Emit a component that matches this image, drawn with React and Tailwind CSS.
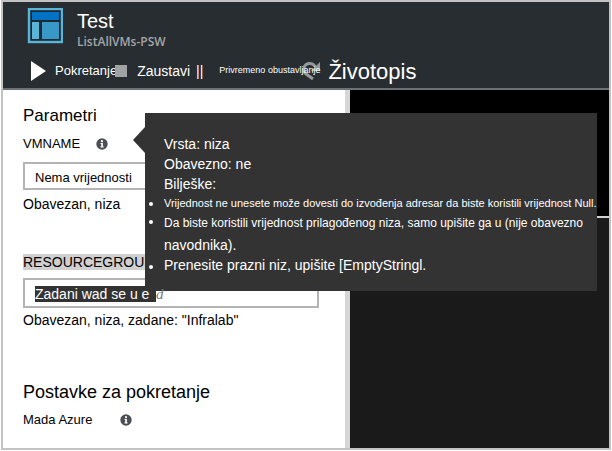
import React from "react";

function InfoIcon() {
  return (
    <svg className="h-3 w-3" viewBox="0 0 12 12" aria-hidden="true">
      <circle cx="6" cy="6" r="5.7" fill="#4c4f52" />
      <circle cx="6" cy="3.2" r="1.1" fill="#fff" />
      <path d="M4.6 5h2.3v3.4h.8v1H4.4v-1h.8V6h-.6z" fill="#fff" />
    </svg>
  );
}

function InfoButton({ label }) {
  return (
    <button type="button" aria-label={label} className="block">
      <InfoIcon />
    </button>
  );
}

function Header() {
  return (
    <header className="border-b-2 border-[#6f7275] bg-[#282d31] text-white">
      <div className="flex gap-3 pl-6 pt-1.5">
        <svg className="h-9 w-9" viewBox="0 0 36 36" aria-hidden="true">
          <rect x="2" y="1" width="33" height="33" fill="#1e2a32" stroke="#59b4d9" strokeWidth="2.4" />
          <rect x="5" y="4" width="27" height="8" fill="#0072c6" />
          <rect x="5" y="14" width="7" height="17" fill="#59b4d9" />
          <rect x="15" y="14" width="17" height="17" fill="#3999c6" />
        </svg>
        <div className="pl-0.5">
          <h1 className="text-[20px] leading-[26px]">Test</h1>
          <p className="font-['Open_Sans',sans-serif] text-[12px] font-semibold leading-4 text-[#a3a6a8]">
            ListAllVMs-PSW
          </p>
        </div>
      </div>
      <nav className="flex h-[38px] items-center whitespace-nowrap pl-7 pt-1">
        <button type="button" className="flex items-center gap-2 text-[13px]">
          <svg className="h-5 w-4" viewBox="0 0 16 20" aria-hidden="true">
            <path d="M0 0L15 10L0 20z" fill="#fff" />
          </svg>
          Pokretanje
        </button>
        <button type="button" className="-ml-0.5 flex items-center gap-2.5 text-[14px]">
          <span className="h-3 w-3 bg-[#a0a2a4]" />
          Zaustavi
        </button>
        <button type="button" className="relative z-10 ml-1.5 flex items-center gap-4 text-[9px]">
          <span className="text-[14px]">||</span>
          <span>Privremeno obustavljanje</span>
        </button>
        <button type="button" className="-ml-5 flex items-center gap-2 text-[22px]">
          <svg className="h-5 w-5" viewBox="0 0 20 20" fill="none" stroke="#96999c" strokeWidth="3" aria-hidden="true">
            <path d="M13 18L5.500 12.500C2 9 4 3 9 2.500c3.500-.3 6 2 7.500 5" />
            <path d="M20 1v9h-9z" fill="#96999c" stroke="none" />
          </svg>
          Životopis
        </button>
      </nav>
    </header>
  );
}

function Tooltip() {
  return (
    <div role="tooltip" className="absolute left-[142px] right-3 top-[23px] bg-[#333333] pb-[18px] pt-[21px] text-[14px] leading-5 text-white">
      <svg className="absolute -left-3 top-3.5 h-[26px] w-3" viewBox="0 0 12 26" aria-hidden="true">
        <path d="M12 0L0 13L12 26z" fill="#333333" />
      </svg>
      <div className="pl-[19px]">
        <p>Vrsta: niza</p>
        <p>Obavezno: ne</p>
        <p>Bilješke:</p>
        <ul className="list-none">
          <Note className="whitespace-nowrap text-[11px] leading-[18px]">
            Vrijednost ne unesete može dovesti do izvođenja adresar da biste koristili vrijednost Null.
          </Note>
          <Note className="text-[12px] leading-[22px]">
            Da biste koristili vrijednost prilagođenog niza, samo upišite ga u (nije obavezno{" "}
            <span className="text-[14px]">navodnika).</span>
          </Note>
          <Note className="text-[14px] leading-4">Prenesite prazni niz, upišite [EmptyStringl.</Note>
        </ul>
      </div>
    </div>
  );
}

function Note({ className, children }) {
  return (
    <li className={"relative " + className}>
      <span className="absolute -left-[15px] top-2 h-1 w-1 rounded-full bg-white" />
      {children}
    </li>
  );
}

export default function App() {
  return (
    <div className="min-h-screen bg-white px-px pb-px font-['Liberation_Sans',Arial,sans-serif] text-black">
      <div className="flex min-h-[450px] flex-col border-2 border-[#c3c3c3]">
        <Header />
        <main className="relative flex flex-1">
          <section className="w-[347px] shrink-0 border-r-[5px] border-[#d4d6d8] pl-5 pr-[26px] pt-4">
            <h2 className="text-[17px] leading-5">Parametri</h2>
            <div className="flex h-9 items-center gap-4">
              <label htmlFor="vmname" className="text-[13px]">VMNAME</label>
              <InfoButton label="VMNAME" />
            </div>
            <input
              id="vmname"
              defaultValue="Nema vrijednosti"
              className="block h-7 w-full border-2 border-[#b4b4b4] bg-white pl-2.5 pt-0.5 text-[13px] outline-none"
            />
            <p className="pt-1 text-[14px] leading-5">Obavezan, niza</p>
            <div className="flex h-16 items-end pb-2">
              <label htmlFor="group" className="bg-[#d0d0d0] text-[14px] leading-4">RESOURCEGROUP</label>
            </div>
            <div className="flex h-[30px] items-center border-2 border-[#b4b4b4] pl-2.5 pt-0.5">
              <input
                id="group"
                defaultValue="Zadani wad se u e"
                className="relative z-10 h-4 w-[121px] bg-[#333333] text-[14px] leading-4 text-white outline-none"
              />
              <span className="relative z-10 font-['Liberation_Serif',serif] text-[15px] italic leading-4 text-[#777777]">d</span>
            </div>
            <p className="pt-0.5 text-[14px] leading-5">Obavezan, niza, zadane: "Infralab"</p>
            <h2 className="pt-[50px] text-[18px] leading-6">Postavke za pokretanje</h2>
            <div className="flex h-8 items-center gap-7">
              <span className="text-[13px]">Mada Azure</span>
              <InfoButton label="Mada Azure" />
            </div>
          </section>
          <section className="flex flex-1 flex-col bg-[#1a1a1a]">
            <div className="h-32 border-b-2 border-[#d0d0d0] bg-black" />
          </section>
          <Tooltip />
        </main>
      </div>
    </div>
  );
}
